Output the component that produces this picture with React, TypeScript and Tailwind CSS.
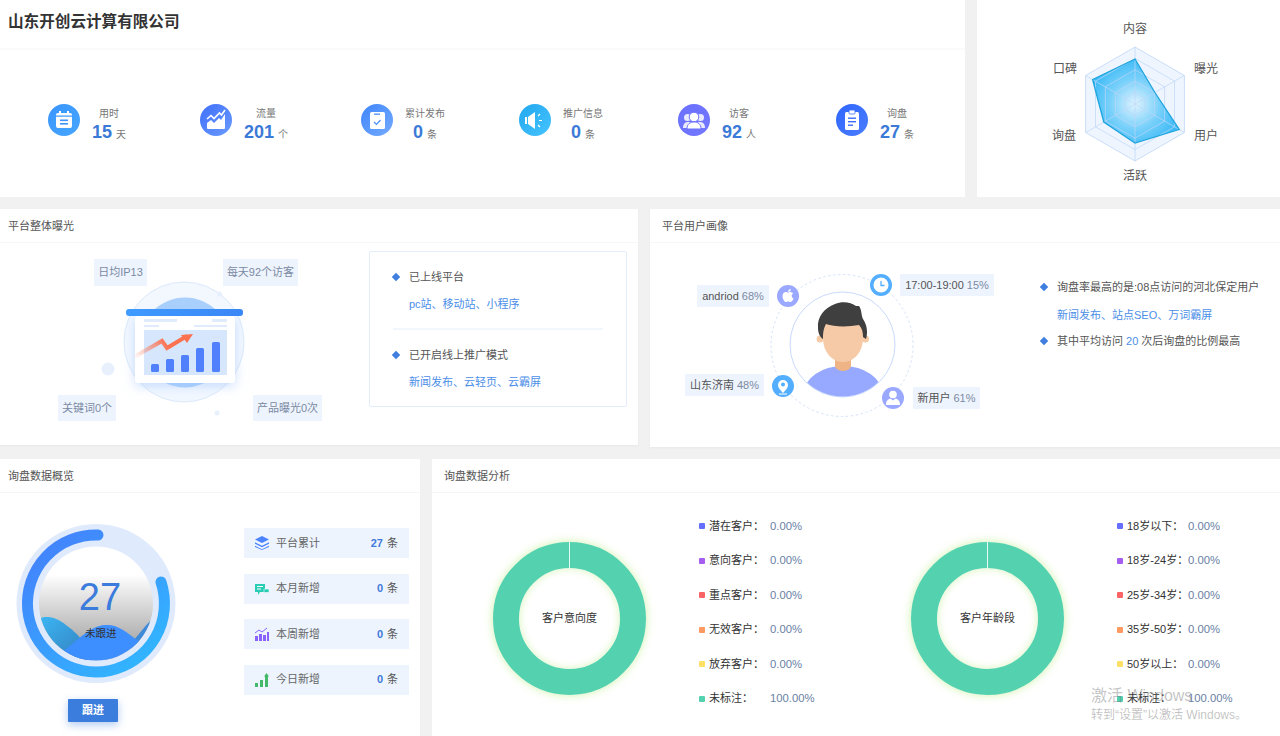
import React from "react";
import { FaApple } from "react-icons/fa";

const Header = ({ title, cls }: { title: string; cls: string }) => (
  <div className={`h-[34px] pt-[1px] flex items-center border-b border-[#f6f6f6] text-[11px] text-[#555] ${cls}`}>{title}</div>
);

const Bubble = ({ id, from, to, children }: { id: string; from: string; to: string; children: React.ReactNode }) => (
  <svg viewBox="0 0 32 32" className="w-[32px] h-[32px] shrink-0">
    <defs>
      <linearGradient id={id} x1="0" y1="0" x2="1" y2="1">
        <stop offset="0" stopColor={from} />
        <stop offset="1" stopColor={to} />
      </linearGradient>
    </defs>
    <circle cx="16" cy="16" r="16" fill={`url(#${id})`} />
    {children}
  </svg>
);

const stats = [
  {
    label: "用时", value: "15", unit: "天", w: "w-[152px]",
    icon: (
      <Bubble id="s1" from="#3a95ff" to="#46a6ff">
        <rect x="8" y="9" width="16" height="15" rx="2" fill="#fff" />
        <rect x="11" y="7" width="2" height="4" fill="#fff" />
        <rect x="19" y="7" width="2" height="4" fill="#fff" />
        <rect x="8" y="11.5" width="16" height="1.2" fill="#3a95ff" />
        <rect x="12" y="15.5" width="8" height="1.6" fill="#3a95ff" />
        <rect x="12" y="19" width="8" height="1.6" fill="#3a95ff" />
      </Bubble>
    ),
  },
  {
    label: "流量", value: "201", unit: "个", w: "w-[161px]",
    icon: (
      <Bubble id="s2" from="#3f6ffb" to="#6b9bff">
        <path d="M7 19l4-3 3 3 5-5 2 2 4-6v14a1 1 0 0 1-1 1H8a1 1 0 0 1-1-1z" fill="#fff" />
        <path d="M7 15l4-3.5 3 3 5.500-5.500 2 2 3.500-5" fill="none" stroke="#fff" strokeWidth="1.600" />
      </Bubble>
    ),
  },
  {
    label: "累计发布", value: "0", unit: "条", w: "w-[158px]",
    icon: (
      <Bubble id="s3" from="#3f85fb" to="#74abff">
        <rect x="9" y="8" width="15" height="17" rx="1.500" fill="#fff" />
        <rect x="13" y="9.500" width="6" height="1.300" fill="#4a8dfb" />
        <path d="M13 18l2.500 2.500 4-4.500" fill="none" stroke="#4a8dfb" strokeWidth="1.200" />
      </Bubble>
    ),
  },
  {
    label: "推广信息", value: "0", unit: "条", w: "w-[159px]",
    icon: (
      <Bubble id="s4" from="#22a8ee" to="#45c3ff">
        <path d="M6 13h2v7H6zM9 13l7-5v17l-7-5z" fill="#fff" />
        <path d="M19 12l2-2M20 16.500h3M19 21l2 2" stroke="#fff" strokeWidth="1.200" />
      </Bubble>
    ),
  },
  {
    label: "访客", value: "92", unit: "人", w: "w-[158px]",
    icon: (
      <Bubble id="s5" from="#6a70ff" to="#7478ff">
        <circle cx="9.500" cy="13.500" r="3.500" fill="#fff" opacity=".85" />
        <circle cx="22.500" cy="13.500" r="3.500" fill="#fff" opacity=".85" />
        <path d="M5 24c0-4 2-6 5-6h12c3 0 5 2 5 6z" fill="#fff" opacity=".85" />
        <circle cx="16" cy="13" r="4.800" fill="#fff" stroke="#6c72ff" />
        <path d="M9 25c0-5 3-7 7-7s7 2 7 7z" fill="#fff" stroke="#6c72ff" />
      </Bubble>
    ),
  },
  {
    label: "询盘", value: "27", unit: "条", w: "w-[79px]",
    icon: (
      <Bubble id="s6" from="#2f66ff" to="#4a7dff">
        <rect x="9" y="8" width="14" height="18" rx="1.500" fill="#fff" />
        <rect x="13" y="6" width="6" height="4" rx="1" fill="#fff" stroke="#3b6cff" strokeWidth=".8" />
        <rect x="12" y="13.500" width="8" height="1.400" fill="#3b6cff" />
        <rect x="12" y="17" width="8" height="1.400" fill="#3b6cff" />
        <rect x="12" y="20.500" width="5" height="1.400" fill="#3b6cff" />
      </Bubble>
    ),
  },
];

const Stat = ({ s }: { s: (typeof stats)[number] }) => (
  <div className={`flex items-start gap-[12px] shrink-0 ${s.w}`}>
    {s.icon}
    <div className="mt-[3px] flex flex-col items-center">
      <div className="text-[10px] leading-[14px] text-[#777]">{s.label}</div>
      <div className="leading-[22px] whitespace-nowrap">
        <span className="text-[18px] font-bold text-[#3c7ad8]">{s.value}</span>
        <span className="ml-[4px] text-[10px] text-[#777]">{s.unit}</span>
      </div>
    </div>
  </div>
);

const Radar = () => {
  const cx = 1135;
  const cy = 104;
  const dirs = [0, 60, 120, 180, 240, 300].map((a) => (a * Math.PI) / 180);
  const pts = (rs: number[]) =>
    dirs.map((a, i) => `${(cx + rs[i] * Math.sin(a)).toFixed(1)},${(cy - rs[i] * Math.cos(a)).toFixed(1)}`).join(" ");
  const ring = (r: number) => pts([r, r, r, r, r, r]);
  const labels: [string, number, number, "middle" | "start"][] = [
    ["内容", 1135, 33, "middle"],
    ["曝光", 1194, 73, "start"],
    ["用户", 1194, 140, "start"],
    ["活跃", 1135, 180, "middle"],
    ["询盘", 1052, 140, "start"],
    ["口碑", 1053, 73, "start"],
  ];
  return (
    <svg viewBox="977 0 303 197" className="block w-[303px] h-[197px]">
      <defs>
        <radialGradient id="rad" gradientUnits="userSpaceOnUse" cx="1135" cy="104" r="46">
          <stop offset="0" stopColor="#dff3ff" />
          <stop offset="0.550" stopColor="#77d0fa" />
          <stop offset="1" stopColor="#3dbaf6" />
        </radialGradient>
      </defs>
      <polygon points={ring(57)} fill="#eff5fe" stroke="#c9def9" />
      <polygon points={pts([45, 23, 51, 39, 36, 49])} fill="url(#rad)" />
      {[45.600, 34.200, 22.800, 11.400].map((r) => (
        <polygon key={r} points={ring(r)} fill="none" stroke="#bcd5f8" strokeOpacity=".7" />
      ))}
      {dirs.map((a) => (
        <line key={a} x1={cx} y1={cy} x2={cx + 57 * Math.sin(a)} y2={cy - 57 * Math.cos(a)} stroke="#bcd5f8" strokeOpacity=".7" />
      ))}
      <polygon points={pts([45, 23, 51, 39, 36, 49])} fill="none" stroke="#1fa5de" strokeWidth="1.300" />
      {labels.map(([t, x, y, a]) => (
        <text key={t} x={x} y={y} textAnchor={a} fontSize="12" fill="#555">{t}</text>
      ))}
    </svg>
  );
};

const Tag = ({ cls, children }: { cls: string; children: React.ReactNode }) => (
  <div className={`absolute bg-[#eef4fe] flex items-center justify-center text-[11px] text-[#7b8aa3] whitespace-nowrap ${cls}`}>{children}</div>
);

const Exposure = () => (
  <div className="relative w-[369px] h-[202px] shrink-0">
    <svg viewBox="0 243 369 202" className="block w-[369px] h-[202px]">
      <defs>
        <linearGradient id="bar" x1="0" y1="0" x2="1" y2="0">
          <stop offset="0" stopColor="#3f9bff" />
          <stop offset="1" stopColor="#3a86f5" />
        </linearGradient>
        <linearGradient id="arrow" gradientUnits="userSpaceOnUse" x1="134" y1="358" x2="165" y2="340">
          <stop offset="0" stopColor="#fb7251" stopOpacity="0" />
          <stop offset="1" stopColor="#fb7251" />
        </linearGradient>
        <filter id="cs" x="-30%" y="-30%" width="160%" height="160%">
          <feDropShadow dx="0" dy="3" stdDeviation="6" floodColor="#9cc3fb" floodOpacity=".55" />
        </filter>
      </defs>
      <circle cx="184" cy="342" r="60" fill="#f3f8ff" stroke="#dbe9fb" />
      <circle cx="185" cy="342.500" r="45" fill="#a9cffc" />
      <rect x="135" y="316" width="100" height="67" rx="3" fill="#fff" filter="url(#cs)" />
      <rect x="126" y="309" width="117" height="7" rx="3" fill="url(#bar)" />
      <rect x="144" y="319" width="33" height="3" fill="#e0ecfb" />
      <rect x="212" y="319" width="15" height="3" fill="#e0ecfb" />
      <rect x="144" y="325" width="15" height="2" fill="#e0ecfb" />
      <rect x="194" y="325" width="33" height="2" fill="#e0ecfb" />
      <rect x="144" y="330" width="83" height="45" fill="#d6e7fd" />
      <rect x="151" y="364" width="8" height="8" rx="1.500" fill="#5080fb" />
      <rect x="166" y="359" width="8" height="13" rx="1.500" fill="#5080fb" />
      <rect x="181" y="355" width="8" height="17" rx="1.500" fill="#5080fb" />
      <rect x="196" y="348" width="8" height="24" rx="1.500" fill="#5080fb" />
      <rect x="212" y="342" width="8" height="30" rx="1.500" fill="#5080fb" />
      <path d="M134 357L162 341L167 348L187 336" fill="none" stroke="url(#arrow)" strokeWidth="4" />
      <path d="M193 334L181 335L187 343Z" fill="#fb7251" />
      <circle cx="108" cy="369" r="6.500" fill="#e8f0fd" />
      <circle cx="219.500" cy="294" r="2.500" fill="#e8f0fd" />
      <circle cx="217" cy="413" r="2.500" fill="#e8f0fd" />
    </svg>
    <Tag cls="left-[94px] top-[16px] w-[53px] h-[27px]">日均IP13</Tag>
    <Tag cls="left-[223px] top-[16px] w-[75px] h-[27px]">每天92个访客</Tag>
    <Tag cls="left-[58px] top-[152px] w-[58px] h-[26px]">关键词0个</Tag>
    <Tag cls="left-[253px] top-[152px] w-[69px] h-[26px]">产品曝光0次</Tag>
  </div>
);

const Diamond = () => <span className="w-[6px] h-[6px] rotate-45 bg-[#3f7fe0] shrink-0" />;

const Portrait = () => (
  <div className="relative w-[350px] h-[204px] shrink-0">
    <svg viewBox="650 243 350 204" className="block w-[350px] h-[204px]">
      <defs>
        <clipPath id="pc"><circle cx="842.500" cy="344.500" r="52" /></clipPath>
      </defs>
      <circle cx="842" cy="345.500" r="71" fill="none" stroke="#d5e3fb" strokeDasharray="2.500 2.500" />
      <circle cx="842.500" cy="344.500" r="52.500" fill="#fff" stroke="#c8dafc" />
      <g clipPath="url(#pc)">
        <ellipse cx="843" cy="393" rx="39" ry="27" fill="#96a9ff" />
      </g>
      <path d="M835 355h16v11a8 5 0 0 1-16 0z" fill="#eeb485" />
      <circle cx="820" cy="339" r="3.500" fill="#f6caa6" />
      <circle cx="865.500" cy="339" r="3.500" fill="#f6caa6" />
      <path d="M823 322h40v16c0 14-9 24-20 24s-20-10-20-24z" fill="#f6caa6" />
      <path d="M818 328C817 317 824 308 835 304C842 301 851 302 856 306L859 306C862 310 861 315 863 319C867 325 868 332 866 339L863 337C863 332 862 328 859 325C848 327 834 327 826 324C823 329 823 335 823 339C820 337 818 333 818 328Z" fill="#3f3f3f" />
      <circle cx="788" cy="296" r="11" fill="#9aa9ff" />
      <FaApple x={780.500} y={288} size={15} color="#fff" />
      <circle cx="881" cy="285" r="11" fill="#53aeff" />
      <circle cx="881" cy="285" r="7.500" fill="#fff" />
      <path d="M881 281v4.500h3.500" fill="none" stroke="#53aeff" strokeWidth="1.300" />
      <circle cx="783" cy="386" r="11" fill="#53aeff" />
      <path d="M783 393c-3-3-5-5.500-5-8a5 5 0 0 1 10 0c0 2.500-2 5-5 8z" fill="#fff" />
      <circle cx="783" cy="384.500" r="2" fill="#53aeff" />
      <rect x="779" y="393.500" width="8" height="1" fill="#fff" />
      <circle cx="893" cy="398" r="11" fill="#9aa9ff" />
      <circle cx="893" cy="394.500" r="3.800" fill="#fff" />
      <path d="M886 405c0-4 2-6 4.500-6.500l2.500 2 2.500-2c2.500.5 4.500 2.500 4.500 6.500z" fill="#fff" />
    </svg>
    <Tag cls="left-[250px] top-[31px] w-[94px] h-[22px]"><span className="text-[#555] mr-[3px]">17:00-19:00</span>15%</Tag>
    <Tag cls="left-[47px] top-[42px] w-[72px] h-[22px]"><span className="text-[#555] mr-[3px]">andriod</span>68%</Tag>
    <Tag cls="left-[35px] top-[131px] w-[79px] h-[22px]"><span className="text-[#555] mr-[3px]">山东济南</span>48%</Tag>
    <Tag cls="left-[263px] top-[144px] w-[67px] h-[22px]"><span className="text-[#555] mr-[3px]">新用户</span>61%</Tag>
  </div>
);

const Gauge = () => (
  <div className="relative w-[192px] h-[160px]">
    <svg viewBox="0 524 192 160" className="block w-[192px] h-[160px]">
      <defs>
        <linearGradient id="prog" gradientUnits="userSpaceOnUse" x1="40" y1="535" x2="150" y2="672">
          <stop offset="0" stopColor="#4480fc" />
          <stop offset="1" stopColor="#30b8ff" />
        </linearGradient>
        <linearGradient id="sky" x1="0" y1="0" x2="0" y2="1">
          <stop offset="0.250" stopColor="#fff" />
          <stop offset="0.830" stopColor="#adadad" />
        </linearGradient>
        <linearGradient id="m1" x1="0" y1="0" x2="1" y2="1">
          <stop offset="0" stopColor="#3cb6f5" />
          <stop offset="1" stopColor="#337cb8" />
        </linearGradient>
        <clipPath id="gc"><circle cx="96" cy="603.500" r="57" /></clipPath>
      </defs>
      <circle cx="96" cy="603.500" r="79.500" fill="#dfeafc" />
      <path d="M98 535A68.500 68.500 0 1 0 161 582" fill="none" stroke="url(#prog)" strokeWidth="11" strokeLinecap="round" />
      <g clipPath="url(#gc)">
        <rect x="39" y="546" width="114" height="114" fill="url(#sky)" />
        <path d="M38 619C46 615 56 617 66 625C78 634 84 640 92 660H38Z" fill="url(#m1)" />
        <path d="M154 618C146 624 141 632 134 640L128 660H150Z" fill="#3d8ad8" />
        <path d="M65 650C78 640 90 626 105 625C118 624 126 632 140 642L146 662H60Z" fill="#3d8eff" />
      </g>
    </svg>
    <div className="absolute left-[78px] top-[53px] w-[44px] text-center text-[38px] leading-[40px] text-[#3a7bdb]">27</div>
    <div className="absolute left-[85px] top-[102px] text-[10.500px] leading-[14px] text-[#333]">未跟进</div>
  </div>
);

const rowIcons = [
  <svg key="a" viewBox="0 0 14 14" className="w-[14px] h-[14px]">
    <path d="M7 0L14 3.500 7 7 0 3.500Z" fill="#4c84ff" />
    <path d="M0 6.200L7 9.700 14 6.200V7.800L7 11.300 0 7.800Z" fill="#4c84ff" />
    <path d="M0 9.700L7 13.200 14 9.700V11L7 14 0 11Z" fill="#4c84ff" />
  </svg>,
  <svg key="b" viewBox="0 0 14 14" className="w-[14px] h-[14px]">
    <path d="M0 2h10v8H5l-2 3v-3H0z" fill="#28cdb4" />
    <rect x="2" y="4" width="6" height="1" fill="#fff" />
    <rect x="2" y="6.500" width="4" height="1" fill="#fff" />
    <rect x="9" y="7" width="5" height="3.500" rx=".5" fill="#28cdb4" stroke="#fff" strokeWidth=".6" />
  </svg>,
  <svg key="c" viewBox="0 0 14 14" className="w-[14px] h-[14px]">
    <rect x="0" y="9" width="3" height="5" fill="#8a63ff" />
    <rect x="4" y="7" width="3" height="7" fill="#8a63ff" />
    <rect x="8" y="8" width="3" height="6" fill="#8a63ff" />
    <rect x="12" y="5" width="2" height="9" fill="#8a63ff" />
    <path d="M0 6L4 3l3 2 5-4" fill="none" stroke="#8a63ff" />
  </svg>,
  <svg key="d" viewBox="0 0 14 14" className="w-[14px] h-[14px]">
    <rect x="0" y="10" width="3" height="4" fill="#45b96a" />
    <rect x="5" y="7" width="3" height="7" fill="#45b96a" />
    <rect x="10" y="3" width="3" height="11" fill="#45b96a" />
    <path d="M11.500 0L14 3.500H9Z" fill="#45b96a" />
  </svg>,
];

const rows = [
  ["平台累计", "27"],
  ["本月新增", "0"],
  ["本周新增", "0"],
  ["今日新增", "0"],
];

const legendColors = ["bg-[#6470fb]", "bg-[#a65ef0]", "bg-[#fb6464]", "bg-[#fd9a62]", "bg-[#ffe066]", "bg-[#54d2b0]"];

const Donut = ({ title, items }: { title: string; items: [string, string][] }) => (
  <div className="w-[418px] shrink-0 flex items-start">
    <div className="relative mt-[49px] w-[153px] h-[153px] shrink-0 rounded-full border-[26.500px] border-[#54d2b0] shadow-[0_0_10px_#cff2a8,inset_0_0_8px_#d8f4b8] flex items-center justify-center">
      <span className="absolute left-1/2 top-[-26.500px] h-[27px] w-[1px] -ml-[0.500px] bg-[#e8f8f3]" />
      <span className="text-[11px] text-[#333] whitespace-nowrap">{title}</span>
    </div>
    <div className="ml-[53px] mt-[23px] flex flex-col gap-[14.500px]">
      {items.map(([l, v], i) => (
        <div key={l} className="h-[20px] flex items-center text-[11px] whitespace-nowrap">
          <span className={`w-[6px] h-[6px] rounded-[1px] ${legendColors[i]}`} />
          <span className="ml-[4px] w-[61px] text-[#333]">{l}</span>
          <span className="text-[11.300px] text-[#6a7fa5]">{v}</span>
        </div>
      ))}
    </div>
  </div>
);

export default function App() {
  return (
    <div className="relative w-[1280px] h-[736px] overflow-hidden bg-[#f1f1f1] flex flex-col gap-[12px] [font-family:'Liberation_Sans','Noto_Sans_CJK_SC',sans-serif]">
      <div className="flex gap-[12px] h-[197px] shrink-0">
        <div className="w-[965px] bg-white">
          <div className="h-[50px] border-b-2 border-[#fafafa] px-[8px] pt-[11px] text-[15.600px] leading-[22px] font-bold text-[#333]">山东开创云计算有限公司</div>
          <div className="flex pl-[48px] pt-[54px]">
            {stats.map((s) => <Stat key={s.label} s={s} />)}
          </div>
        </div>
        <div className="w-[303px] bg-white"><Radar /></div>
      </div>

      <div className="flex gap-[12px] h-[238px] shrink-0 items-start">
        <div className="w-[638px] h-[236px] bg-white shadow-[0_1px_2px_#e8e8e8]">
          <Header title="平台整体曝光" cls="px-[8px]" />
          <div className="flex">
            <Exposure />
            <div className="mt-[8px] w-[258px] h-[156px] border border-[#e3eefc] rounded-[2px] pt-[17px] text-[11px]">
              <div className="h-[16px] pl-[23px] flex items-center gap-[10px] text-[#555]"><Diamond />已上线平台</div>
              <div className="h-[16px] mt-[11px] pl-[39px] flex items-center text-[#4b8ee8]">pc站、移动站、小程序</div>
              <div className="h-[2px] mx-[23px] mt-[16px] bg-[#f2f6fd]" />
              <div className="h-[16px] mt-[17px] pl-[23px] flex items-center gap-[10px] text-[#555]"><Diamond />已开启线上推广模式</div>
              <div className="h-[16px] mt-[11px] pl-[39px] flex items-center text-[#4b8ee8]">新闻发布、云轻页、云霸屏</div>
            </div>
          </div>
        </div>
        <div className="w-[630px] h-[238px] bg-white shadow-[0_1px_2px_#e8e8e8]">
          <Header title="平台用户画像" cls="px-[12px]" />
          <div className="flex">
            <Portrait />
            <div className="ml-[41px] pt-[36px] text-[11px] whitespace-nowrap">
              <div className="h-[16px] flex items-center gap-[10px] text-[#555]"><Diamond />询盘率最高的是:08点访问的河北保定用户</div>
              <div className="h-[16px] mt-[12px] pl-[16px] flex items-center text-[#4b8ee8]">新闻发布、站点SEO、万词霸屏</div>
              <div className="h-[16px] mt-[10px] flex items-center gap-[10px] text-[#555]"><Diamond /><span>其中平均访问 <span className="text-[#4b8ee8]">20</span> 次后询盘的比例最高</span></div>
            </div>
          </div>
        </div>
      </div>

      <div className="flex gap-[12px] flex-1 min-h-0">
        <div className="w-[420px] bg-white">
          <Header title="询盘数据概览" cls="px-[8px]" />
          <div className="flex">
            <div className="w-[244px] shrink-0 pt-[31px]">
              <Gauge />
              <button className="block ml-[68px] mt-[15px] w-[50px] h-[23px] bg-[#3b7ddd] rounded-[1px] text-white text-[11px] font-bold shadow-[0_3px_8px_rgba(59,125,221,0.4)]">跟进</button>
            </div>
            <div className="w-[165px] pt-[35px] flex flex-col gap-[15.500px]">
              {rows.map(([l, v], i) => (
                <div key={l} className="h-[30px] bg-[#edf4fe] pl-[11px] pr-[11px] flex items-center text-[11px]">
                  {rowIcons[i]}
                  <span className="ml-[7px] text-[#666]">{l}</span>
                  <span className="ml-auto font-bold text-[#4279d9]">{v}</span>
                  <span className="ml-[4px] text-[#555]">条</span>
                </div>
              ))}
            </div>
          </div>
        </div>
        <div className="w-[848px] bg-white">
          <Header title="询盘数据分析" cls="px-[12px]" />
          <div className="flex pl-[61px]">
            <Donut title="客户意向度" items={[["潜在客户：", "0.00%"], ["意向客户：", "0.00%"], ["重点客户：", "0.00%"], ["无效客户：", "0.00%"], ["放弃客户：", "0.00%"], ["未标注：", "100.00%"]]} />
            <Donut title="客户年龄段" items={[["18岁以下：", "0.00%"], ["18岁-24岁：", "0.00%"], ["25岁-34岁：", "0.00%"], ["35岁-50岁：", "0.00%"], ["50岁以上：", "0.00%"], ["未标注：", "100.00%"]]} />
          </div>
        </div>
      </div>

      <div className="absolute left-[1091px] top-[686px] pointer-events-none text-[rgba(110,110,110,0.42)] whitespace-nowrap">
        <div className="text-[16px] leading-[20px]">激活 Windows</div>
        <div className="text-[12px] leading-[16px] mt-[1px]">转到“设置”以激活 Windows。</div>
      </div>
    </div>
  );
}
